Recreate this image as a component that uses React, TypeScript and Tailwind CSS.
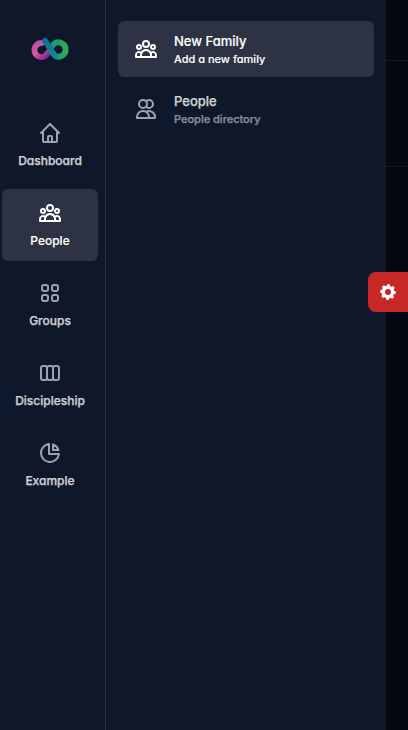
import type { IconType } from 'react-icons';
import { HiCog, HiOutlineChartPie, HiOutlineHome, HiOutlineUserGroup, HiOutlineUsers, HiOutlineViewBoards, HiOutlineViewGrid } from 'react-icons/hi';

const sections: { label: string; icon: IconType; active?: boolean }[] = [
  { label: 'Dashboard', icon: HiOutlineHome },
  { label: 'People', icon: HiOutlineUserGroup, active: true },
  { label: 'Groups', icon: HiOutlineViewGrid },
  { label: 'Discipleship', icon: HiOutlineViewBoards },
  { label: 'Example', icon: HiOutlineChartPie },
];

const links: { title: string; subtitle: string; icon: IconType; active?: boolean }[] = [
  { title: 'New Family', subtitle: 'Add a new family', icon: HiOutlineUserGroup, active: true },
  { title: 'People', subtitle: 'People directory', icon: HiOutlineUsers },
];

function Logo() {
  return (
    <svg viewBox="0 0 40 26" className="h-[26px] w-10" fill="none" strokeLinecap="round" strokeWidth="5.8">
      <defs>
        <linearGradient id="pink" x1="6" y1="4" x2="19" y2="20" gradientUnits="userSpaceOnUse">
          <stop stopColor="#a8519c" />
          <stop offset=".5" stopColor="#e055a8" />
          <stop offset="1" stopColor="#7a2a90" />
        </linearGradient>
        <linearGradient id="green" x1="20" y1="13" x2="38" y2="13" gradientUnits="userSpaceOnUse">
          <stop stopColor="#168f83" />
          <stop offset="1" stopColor="#31b04f" />
        </linearGradient>
        <linearGradient id="blue" x1="14" y1="4" x2="25" y2="21" gradientUnits="userSpaceOnUse">
          <stop stopColor="#116b9c" />
          <stop offset="1" stopColor="#128b8c" />
        </linearGradient>
      </defs>
      <path d="M11.500 6.900A7.100 7.100 0 1 0 15.300 20L18.300 16.500" stroke="url(#pink)" />
      <path d="M21.800 10.500L23.800 8A7.200 7.200 0 1 1 26 20.300" stroke="url(#green)" />
      <path d="M15 4.800C17 6.500 21.500 17 25.800 20.300" stroke="url(#blue)" />
    </svg>
  );
}

export default function App() {
  return (
    <div className="relative flex h-[730px] w-[408px] overflow-hidden bg-[#0f172a] font-['Inter','Liberation_Sans',sans-serif] text-white [font-feature-settings:'cv11']">
      <nav className="flex w-[106px] shrink-0 flex-col border-r border-[#293042]">
        <div className="flex h-[109px] w-[100px] justify-center pt-9">
          <Logo />
        </div>
        <div className="flex w-[100px] flex-col gap-2 px-0.5">
          {sections.map(({ label, icon: Icon, active }) => (
            <a key={label} className={`flex h-[72px] flex-col items-center rounded-md pt-3 ${active ? 'bg-[#2d3344]' : ''}`}>
              <Icon size={24} className={active ? '' : 'opacity-60'} />
              <span className={`mt-1.5 text-[12px] leading-5 font-medium whitespace-nowrap ${active ? '[-webkit-text-stroke:0.15px_white]' : 'opacity-80 [-webkit-text-stroke:0.25px_white]'}`}>{label}</span>
            </a>
          ))}
        </div>
      </nav>
      <aside className="flex w-[280px] shrink-0 flex-col gap-1 px-3 pt-[21px]">
        {links.map(({ title, subtitle, icon: Icon, active }) => (
          <a key={title} className={`flex h-14 items-center gap-4 rounded-md px-4 ${active ? 'bg-[#2d3344]' : ''}`}>
            <Icon size={24} className={active ? '' : 'opacity-60'} />
            <div className="flex flex-col">
              <span className={`text-[13px] leading-5 font-medium ${active ? '[-webkit-text-stroke:0.15px_white]' : 'opacity-80 [-webkit-text-stroke:0.25px_white]'}`}>{title}</span>
              <span className={`text-[11px] leading-4 font-medium ${active ? '[-webkit-text-stroke:0.15px_white]' : 'opacity-50 [-webkit-text-stroke:0.25px_white]'}`}>{subtitle}</span>
            </div>
          </a>
        ))}
      </aside>
      <main className="grow bg-[#050810]">
        <div className="h-[61px] border-b border-[#14171e]" />
        <div className="h-[106px] border-b border-[#14171e]" />
      </main>
      <button className="absolute top-[272px] right-0 flex size-10 items-center justify-center rounded-l-lg bg-[#c62828]">
        <HiCog size={20} className="rotate-[4deg]" />
      </button>
    </div>
  );
}
